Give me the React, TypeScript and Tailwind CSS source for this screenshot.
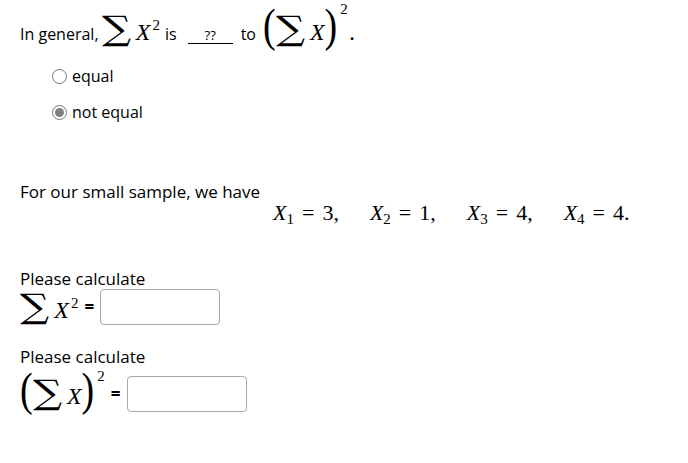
const serif = "font-['Liberation_Serif','DejaVu_Serif',serif]";

function Sum() {
  return (
    <span className="mr-[4px] inline-block origin-left scale-x-[1.2] font-['DejaVu_Serif',serif] text-[34px] leading-none">
      ∑
    </span>
  );
}

function X() {
  return <span className={`${serif} italic text-[24px] leading-none`}>X</span>;
}

function Sup({ lift }: { lift: string }) {
  return <span className={`${serif} text-[15px] leading-none relative ${lift}`}>2</span>;
}

function SumX2() {
  return (
    <span className="inline-flex items-baseline">
      <Sum />
      <span className="ml-[6px]">
        <X />
      </span>
      <Sup lift="-top-[10px] ml-[2px]" />
    </span>
  );
}

function Paren({ ch }: { ch: string }) {
  return (
    <span className={`${serif} inline-block origin-[50%_75%] scale-y-[1.2] text-[38px] leading-none`}>
      {ch}
    </span>
  );
}

function ParenSumX2({ lift }: { lift: string }) {
  return (
    <span className="inline-flex items-baseline">
      <Paren ch="(" />
      <Sum />
      <span className="ml-[6px]">
        <X />
      </span>
      <Paren ch=")" />
      <Sup lift={`${lift} ml-[3px]`} />
    </span>
  );
}

function Radio({ checked, label }: { checked?: boolean; label: string }) {
  return (
    <label className="flex items-center gap-[5px]">
      <span className="flex h-[15px] w-[15px] items-center justify-center rounded-full border border-[#767676] bg-white">
        {checked ? <span className="h-[9px] w-[9px] rounded-full bg-[#808080]" /> : null}
      </span>
      <span>{label}</span>
    </label>
  );
}

function Term({ sub, val, last }: { sub: string; val: string; last?: boolean }) {
  return (
    <span className={`${serif} text-[22px] leading-none whitespace-nowrap`}>
      <span className="italic">X</span>
      <span className="relative top-[4px] text-[15px]">{sub}</span>
      <span className="mx-[8px]">=</span>
      {val}
      {last ? "." : ","}
    </span>
  );
}

export default function App() {
  return (
    <div className="min-h-[463px] bg-white px-5 pt-[8px] text-[17px] text-black font-['Open_Sans','Noto_Sans',sans-serif]">
      <div className="flex items-baseline text-[16px]">
        <span>In general,</span>
        <span className="ml-[3px]">
          <SumX2 />
        </span>
        <span className="ml-[5px]">is</span>
        <span className="ml-[11px] w-[45px] border-b border-black text-center text-[13px] leading-[15px]">??</span>
        <span className="ml-[8px]">to</span>
        <span className="ml-[7px]">
          <ParenSumX2 lift="-top-[26px]" />
        </span>
        <span className="ml-[2px] font-bold">.</span>
      </div>

      <div className="ml-8 mt-[18px] flex flex-col gap-[12px] text-[16px]">
        <Radio label="equal" />
        <Radio checked label="not equal" />
      </div>

      <p className="mt-[58px] leading-5">For our small sample, we have</p>
      <div className="flex gap-[31px] pl-[253px]">
        <Term sub="1" val="3" />
        <Term sub="2" val="1" />
        <Term sub="3" val="4" />
        <Term sub="4" val="4" last />
      </div>

      <p className="mt-[45px] leading-5">Please calculate</p>
      <div className="flex items-center gap-[6px]">
        <SumX2 />
        <span className="font-bold">=</span>
        <input className="h-[36px] w-[120px] rounded border border-[#a9a9a9] bg-white" />
      </div>

      <p className="mt-[23px] leading-[18px]">Please calculate</p>
      <div className="mt-[4px] flex items-center gap-[6px]">
        <ParenSumX2 lift="-top-[23px]" />
        <span className="mt-[6px] font-bold">=</span>
        <input className="mt-[6px] h-[36px] w-[120px] rounded border border-[#a9a9a9] bg-white" />
      </div>
    </div>
  );
}
